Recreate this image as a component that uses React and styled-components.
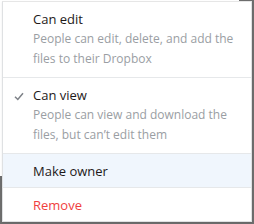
import React from 'react'
import styled, { createGlobalStyle } from 'styled-components'

const GlobalStyle = createGlobalStyle`
  html, body {
    margin: 0;
    padding: 0;
    background: #fff;
  }
  body {
    width: 254px;
    height: 224px;
    overflow: hidden;
    font-family: "Open Sans", "Liberation Sans", sans-serif;
  }
`

const Page = styled.div`
  position: relative;
  width: 254px;
  height: 224px;
  overflow: hidden;
`

// grey page content peeking out behind the menu
const Backdrop = styled.div`
  position: absolute;
  background: #6e6e6e;
  ${(p) => p.side === 'right' && 'top: 0; right: 0; width: 15px; height: 224px;'}
  ${(p) => p.side === 'bottom' && 'left: 0; bottom: 0; width: 254px; height: 48px;'}
`

const Menu = styled.ul`
  position: absolute;
  top: 1px;
  left: 2px;
  width: 248px;
  margin: 0;
  padding: 0;
  list-style: none;
  background: #fff;
  border: 1px solid #dfe1e3;
  border-top-color: #e6e6e6;
  box-shadow: 0 1px 2px rgba(0, 0, 0, 0.08);
`

const Item = styled.li`
  position: relative;
  padding: ${(p) => (p.tall ? '7px 12px 8px 30px' : '7px 12px 6px 30px')};
  background: ${(p) => (p.active ? '#f0f6fd' : '#fff')};
  & + & {
    border-top: 1px solid #e6e8ea;
  }
`

const Title = styled.div`
  font-size: 13px;
  line-height: 20px;
  color: ${(p) => (p.danger ? '#f03e3e' : '#1e1919')};
`

const Desc = styled.div`
  font-size: 12px;
  line-height: 20px;
  color: #9a9ea3;
`

const Check = styled.svg`
  position: absolute;
  left: 11px;
  top: 14px;
  width: 10px;
  height: 9px;
`

const menu = [
  { title: 'Can edit', desc: 'People can edit, delete, and add the files to their Dropbox' },
  { title: 'Can view', desc: 'People can view and download the files, but can\u2019t edit them', checked: true },
  { title: 'Make owner', active: true },
  { title: 'Remove', danger: true },
]

export default function App() {
  return (
    <Page>
      <GlobalStyle />
      <Backdrop side="right" />
      <Backdrop side="bottom" />
      <Menu>
        {menu.map((m) => (
          <Item key={m.title} tall={!!m.desc} active={m.active}>
            {m.checked && (
              <Check viewBox="0 0 10 9">
                <polyline points="1,4.8 3.8,7.5 9,1.2" fill="none" stroke="#7d8187" strokeWidth="1.5" />
              </Check>
            )}
            <Title danger={m.danger}>{m.title}</Title>
            {m.desc && <Desc>{m.desc}</Desc>}
          </Item>
        ))}
      </Menu>
    </Page>
  )
}
